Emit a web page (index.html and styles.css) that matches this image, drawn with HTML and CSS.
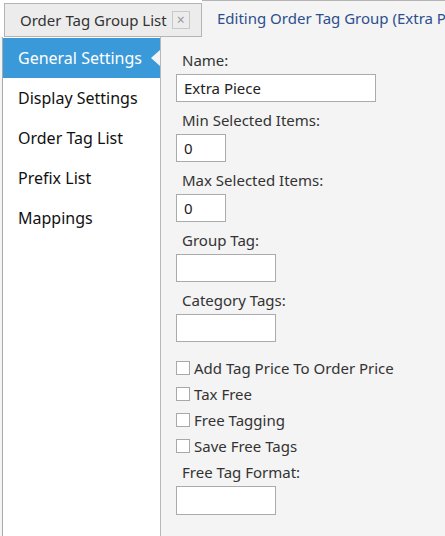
FILE: index.html
```html
<!DOCTYPE html>
<html lang="en">
  <head>
    <meta charset="UTF-8" />
    <title>Order Tag Group</title>
    <link rel="stylesheet" href="styles.css">
  </head>
  <body>
    <div class="tabs">
      <div class="tab">
        <span>Order Tag Group List</span>
        <span class="tab-close">&times;</span>
      </div>
      <div class="tab active">Editing Order Tag Group (Extra Piece)</div>
    </div>

    <div class="editor">
      <ul class="side-nav">
        <li class="selected">General Settings</li>
        <li>Display Settings</li>
        <li>Order Tag List</li>
        <li>Prefix List</li>
        <li>Mappings</li>
      </ul>

      <div class="form">
        <div class="field">
          <label for="name">Name:</label>
          <input type="text" id="name" class="wide" value="Extra Piece" />
        </div>
        <div class="field">
          <label for="min_items">Min Selected Items:</label>
          <input type="text" id="min_items" class="small" value="0" />
        </div>
        <div class="field">
          <label for="max_items">Max Selected Items:</label>
          <input type="text" id="max_items" class="small" value="0" />
        </div>
        <div class="field">
          <label for="group_tag">Group Tag:</label>
          <input type="text" id="group_tag" class="medium" />
        </div>
        <div class="field">
          <label for="category_tags">Category Tags:</label>
          <input type="text" id="category_tags" class="medium" />
        </div>

        <div class="checks">
          <label class="check"><input type="checkbox" /> Add Tag Price To Order Price</label>
          <label class="check"><input type="checkbox" /> Tax Free</label>
          <label class="check"><input type="checkbox" /> Free Tagging</label>
          <label class="check"><input type="checkbox" /> Save Free Tags</label>
        </div>

        <div class="field last">
          <label for="free_tag_format">Free Tag Format:</label>
          <input type="text" id="free_tag_format" class="medium" />
        </div>
      </div>
    </div>
  </body>
</html>
```

FILE: styles.css
```css
html {
  box-sizing: border-box;
  font-size: 15px;
}

*,
*:before,
*:after {
  box-sizing: inherit;
}

body,
ul,
li {
  margin: 0;
  padding: 0;
}

body {
  font-family: "Noto Sans", "Open Sans", sans-serif;
  background: #fff;
  height: 536px;
  display: flex;
  flex-direction: column;
  overflow: hidden;
}

.tabs {
  display: flex;
  height: 37px;
  flex-shrink: 0;
}

.tab {
  margin: 3px 0 0 4px;
  width: 198px;
  flex-shrink: 0;
  height: 34px;
  padding: 0 0 0 15px;
  background: #ececec;
  border: 1px solid #b4b4b4;
  color: #333;
  font-size: 15px;
  white-space: nowrap;
  display: flex;
  align-items: center;
  gap: 5px;
}

.tab-close {
  width: 18px;
  height: 18px;
  border: 1px solid #c8c8c8;
  color: #999;
  font-size: 14px;
  line-height: 15px;
  text-align: center;
}

.tab.active {
  margin: 0;
  width: auto;
  flex: 1;
  height: 37px;
  padding: 0 0 3px 15px;
  background: #f4f4f4;
  border: none;
  border-top: 1px solid #b4b4b4;
  color: #2c4f8e;
  overflow: hidden;
}

.editor {
  flex: 1;
  display: flex;
  background: #f4f4f4;
}

.side-nav {
  list-style: none;
  width: 159px;
  flex-shrink: 0;
  margin-left: 2px;
  padding-top: 1px;
  background: #fff;
  border-left: 1px solid #aaa;
  border-right: 1px solid #b8b8b8;
  font-size: 16px;
  color: #111;

  li {
    height: 40px;
    line-height: 40px;
    padding-left: 15px;
    position: relative;
  }

  /* current page, with a notch cut into its right edge */
  .selected {
    background: #3a99d9;
    color: #fff;
  }

  .selected:after {
    content: "";
    position: absolute;
    right: 0;
    top: 12px;
    border: 8px solid transparent;
    border-right: 9px solid #f4f4f4;
    border-left: none;
  }
}

.form {
  padding: 13px 0 0 15px;
  display: flex;
  flex-direction: column;
  color: #333;
}

.field {
  display: flex;
  flex-direction: column;
  align-items: start;
  margin-bottom: 8px;

  label {
    line-height: 20px;
    padding-left: 6px;
    margin-bottom: 4px;
  }
}

.field.last {
  margin-top: 3px;

  input {
    height: 29px;
  }
}

input[type="text"] {
  height: 28px;
  border: 1px solid #ababab;
  background: #fff;
  padding: 0 7px;
  font-family: inherit;
  font-size: 15px;
  color: #222;
  outline: none;
}

.wide {
  width: 200px;
}

.small {
  width: 50px;
}

.medium {
  width: 100px;
}

.checks {
  display: flex;
  flex-direction: column;
  margin-top: 5px;
}

.check {
  height: 26px;
  display: flex;
  align-items: center;
  gap: 4px;

  input {
    appearance: none;
    margin: 0;
    width: 14px;
    height: 14px;
    border: 1px solid #a8a8a8;
    background: #fff;
  }
}
```
